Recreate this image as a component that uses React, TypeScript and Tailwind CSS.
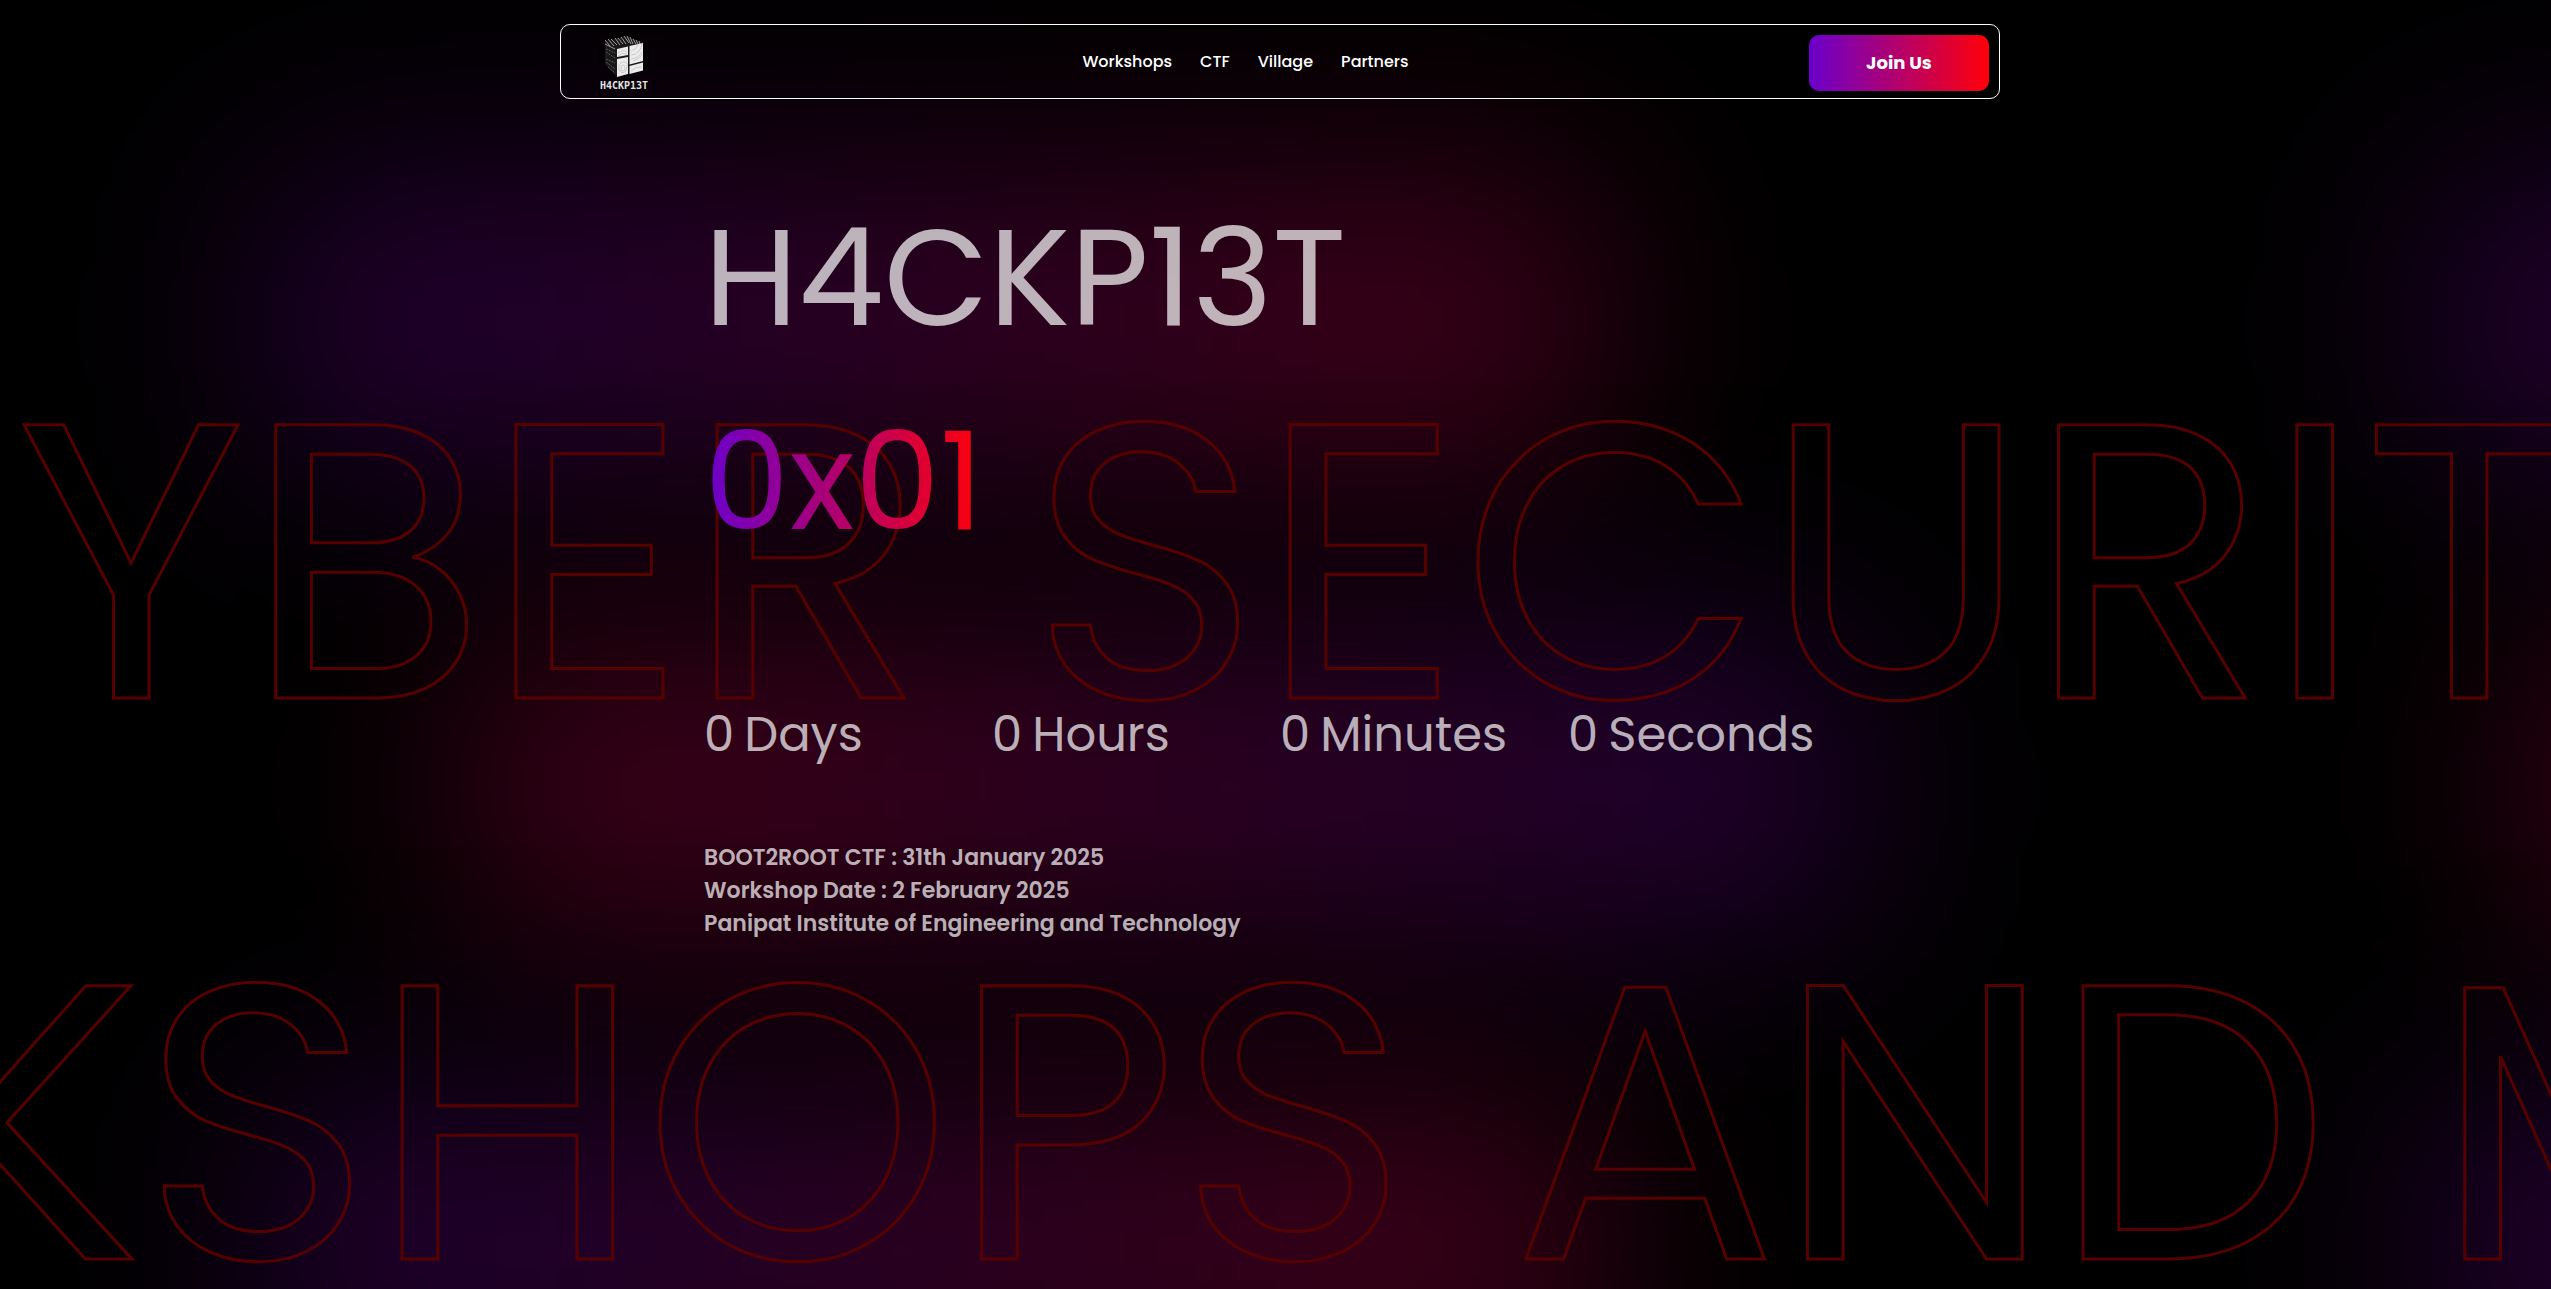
function Glow() {
  const bar = "absolute h-[24%] rounded-[80px] blur-[105px]";
  const purpleRed = "bg-linear-to-r/srgb from-[#21002e] from-15% to-[#3a0018] to-85%";
  const redPurple = "bg-linear-to-r/srgb from-[#3a0018] from-15% to-[#21002e] to-90%";
  return (
    <div aria-hidden="true" className="pointer-events-none absolute inset-0 overflow-hidden">
      <div className={`${bar} ${purpleRed} top-[13%] left-[10%] w-[53%]`} />
      <div className={`${bar} ${purpleRed} top-[13%] left-[95%] w-[53%]`} />
      <div className={`${bar} ${redPurple} top-[49%] left-[18%] w-[55%]`} />
      <div className={`${bar} ${redPurple} top-[49%] left-[99%] w-[55%]`} />
      <div className={`${bar} ${purpleRed} top-[85%] left-[10%] w-[53%]`} />
      <div className={`${bar} ${purpleRed} top-[85%] left-[95%] w-[53%]`} />
    </div>
  );
}

function Logo() {
  return (
    <svg viewBox="0 0 52 56" className="h-14 w-13" role="img" aria-label="H4CKP13T">
      <path d="M7 6 L27 1 L45 7 V34 L19 42 L7 29Z" fill="#191919" />
      <g fill="none" stroke="#9a9a9a" strokeWidth="1">
        <path d="M7 5l5 6M10 4l6 7M13 4l6 6M17 3l5 7M20 3l5 6M23 2l5 7M26 1l5 7M29 1l4 8M32 2l3 7M35 4l3 5M38 5l2 4M41 6l1 3M7 9l10 5" />
        <path d="M8 14l9 4M8 17l9 6M8 24l9 4M8 27l9 7M10 32l7 6" stroke="#5c5c5c" strokeDasharray="2 1" />
      </g>
      <path d="M19 14l11-2.500v8.500l-11 2zM19 24l11-2v17l-11 3zM31.500 11l13.500-3v18l-13.500 3.500zM31.500 31l13.500-3.500v8l-13.500 3.500z" fill="#ececec" />
      <g fill="none" stroke="#aaa" strokeWidth=".5">
        <path d="M20 18q5-4 9-1M20 21q4-4 9-2M21 34q-1-6 4-7t4 5-4 6-4-4M23 34q0-4 2-4t2 3-2 3-2-2M33 20q5 0 8-4t3-7M33 24q8-1 11-7M35 26q6-2 9-6M33 16q5-1 7-6M33 36q5-5 11-4" />
      </g>
      <text x="26" y="54" textAnchor="middle" fill="#e4e4e4" className="font-['DejaVu_Sans_Mono',monospace] text-[10px] font-bold">H4CKP13T</text>
    </svg>
  );
}

const links = ["Workshops", "CTF", "Village", "Partners"];
const countdown = ["Days", "Hours", "Minutes", "Seconds"];
const outline =
  "shrink-0 whitespace-nowrap text-[392px] leading-none text-transparent [-webkit-text-stroke:3px_#570000]";

export default function App() {
  return (
    <div className="relative min-h-screen overflow-hidden bg-black font-[Poppins,sans-serif] text-white">
      <Glow />
      <div aria-hidden="true" className="pointer-events-none absolute inset-0 flex flex-col gap-[169px] overflow-hidden pt-[365px]">
        <div className={outline}>
          <span className="ml-[-286px]">CYBER SECURITY</span>
        </div>
        <div className={outline}>
          <span className="ml-[-1022px]">WORKSHOPS AND MORE</span>
        </div>
      </div>

      <header className="relative mt-6 ml-[21.950%] flex h-[75px] w-[56.450%] items-center justify-between rounded-[10px] border border-white pr-[10px] pl-[37px]">
        <a href="#home" className="w-[84px] pt-[3px]"><Logo /></a>
        <nav className="flex gap-7 text-base font-medium">
          {links.map((l) => <a key={l} href={`#${l.toLowerCase()}`}>{l}</a>)}
        </nav>
        <button className="mt-[3px] h-14 w-[180px] rounded-[10px] bg-linear-to-r/srgb from-[#6a00cc] to-[#ff0008] text-lg font-bold">Join Us</button>
      </header>

      <main className="relative ml-[27.600%] pt-[77px] text-white/70">
        <h1 className="text-[136px] leading-[204px]">
          H4CKP13T
          <br />
          <span className="inline-block bg-linear-to-r/srgb from-[#6a00cc] to-[#ff0008] bg-clip-text text-transparent">0x01</span>
        </h1>
        <div className="mt-[115px] flex text-5xl leading-[72px]">
          {countdown.map((u) => (
            <p key={u} className="flex w-72 gap-[10px]"><span>0</span><span>{u}</span></p>
          ))}
        </div>
        <div className="mt-[70px] text-[22px] leading-[33px] font-semibold">
          <p>BOOT2ROOT CTF : 31th January 2025</p>
          <p>Workshop Date : 2 February 2025</p>
          <p>Panipat Institute of Engineering and Technology</p>
        </div>
      </main>
    </div>
  );
}
